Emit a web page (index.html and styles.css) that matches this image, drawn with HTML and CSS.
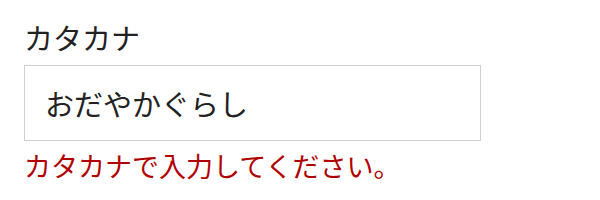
FILE: index.html
```html
<!DOCTYPE html>
<html lang="ja">
<head>
    <meta charset="UTF-8">
    <title>カタカナ</title>
    <meta name="viewport" content="width=device-width, initial-scale=1.0">
    <link rel="stylesheet" href="styles.css">
</head>
<body>
    <form class="field" autocomplete="off">
        <label class="field-label" for="kana">カタカナ</label>
        <input class="field-input" type="text" id="kana" value="おだやかぐらし">
        <div class="field-error">カタカナで入力してください。</div>
    </form>
</body>
</html>
```

FILE: styles.css
```css
body { margin: 0; background: #fff; font-family: "Noto Sans CJK JP", "Noto Sans", sans-serif; color: #222; }
.field { display: flex; flex-direction: column; align-items: flex-start; padding: 19px 24px 0; }
.field-label { font-size: 29px; line-height: 36px; margin-bottom: 10px; }
.field-input {
    box-sizing: border-box; width: 457px; height: 76px; margin: 0;
    padding: 0 20px; border: 1px solid #cfcfcf; border-radius: 0; outline: none;
    font-family: inherit; font-size: 29px; color: #222; background: #fff;
}
.field-error { font-size: 27px; line-height: 34px; margin-top: 8px; color: #b00000; }
```
